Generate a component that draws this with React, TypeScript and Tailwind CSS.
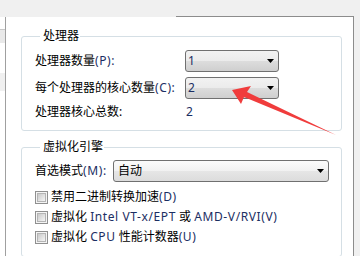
import React from 'react';

const Latin: React.FC<{ children: React.ReactNode }> = ({ children }) => (
  <span className="text-[#1b2e63] tracking-[0.6px]">{children}</span>
);

const Caret = () => (
  <svg width="7" height="4" viewBox="0 0 7 4" className="shrink-0">
    <path d="M0 0h7L3.5 4z" fill="#000" />
  </svg>
);

const Combo: React.FC<{ value: React.ReactNode; light?: boolean; className?: string }> = ({ value, light, className }) => (
  <div
    className={
      'h-[22px] rounded-[3px] border border-[#707070] flex items-center justify-between pl-[2px] pr-[4px] ' +
      (light
        ? 'bg-[linear-gradient(#fbfbfb,#f1f1f1_50%,#e6e6e6_50%,#dcdcdc)] '
        : 'bg-[linear-gradient(#f2f2f2,#ebebeb_50%,#dddddd_50%,#cfcfcf)] ') +
      (className ?? '')
    }
  >
    <span className="leading-[18px]">{value}</span>
    <Caret />
  </div>
);

const Check: React.FC<{ children: React.ReactNode }> = ({ children }) => (
  <div className="h-[20px] flex items-center gap-[3px]">
    <div className="w-[13px] h-[13px] border border-[#8f8f8f] bg-[#f4f4f4] p-[1px] shrink-0">
      <div className="w-full h-full border border-[#b4b4b4] bg-gradient-to-br from-[#c9c9c9] to-[#f5f5f5]" />
    </div>
    <span className="leading-[18px] whitespace-nowrap">{children}</span>
  </div>
);

const App: React.FC = () => {
  return (
    <div className="relative w-[360px] h-[256px] overflow-hidden bg-[#f0f0f0] text-[12px] text-black font-['Noto_Sans','Noto_Sans_CJK_SC',sans-serif]">
      <div className="h-[17px] flex">
        <div className="w-[176px]" />
        <div className="flex-1 mr-[6px] mt-[16px] h-[1px] bg-[#8c8c8c]" />
      </div>

      <div className="flex h-[239px]">
        {/* edge of the device list */}
        <div className="w-[6px] bg-white border-r border-[#a0a0a0] flex flex-col">
          <div className="h-[12px]" />
          <div className="h-[14px] bg-[#e9e9e9] border-t border-[#c8c8c8]" />
          <div className="h-[30px]" />
          <div className="h-[18px] bg-[#f0f0f0]" />
        </div>

        {/* settings pane */}
        <div className="w-[348px] bg-white border-r border-[#8c8c8c] pl-[15px] pr-[11px] pt-[12px]">
          <fieldset className="border border-[#d5dfe5] rounded-[3px] pl-[13px] pt-[7px] pb-[9px]">
            <legend className="ml-[5px] pl-[3px] pr-[1px] leading-[14px]">处理器</legend>
            <div className="flex flex-col">
              <div className="flex items-center h-[22px]">
                <span className="w-[150px] leading-[18px]">
                  处理器数量<Latin>(P):</Latin>
                </span>
                <Combo value={<Latin>1</Latin>} className="w-[94px]" />
              </div>
              <div className="flex items-center h-[22px] mt-[5px]">
                <span className="w-[150px] leading-[18px] whitespace-nowrap">
                  每个处理器的核心数量<Latin>(C):</Latin>
                </span>
                <Combo value={<Latin>2</Latin>} className="w-[94px]" />
              </div>
              <div className="flex items-center h-[18px] mt-[4px]">
                <span className="w-[150px] leading-[18px]">处理器核心总数:</span>
                <span className="leading-[18px] pl-[1px]">
                  <Latin>2</Latin>
                </span>
              </div>
            </div>
          </fieldset>

          <fieldset className="mt-[9px] border border-[#d5dfe5] rounded-[3px] pl-[13px] pt-[6px] pb-[9px]">
            <legend className="ml-[5px] pl-[3px] pr-[1px] leading-[14px]">虚拟化引擎</legend>
            <div className="flex items-center h-[22px]">
              <span className="w-[78px] leading-[18px] whitespace-nowrap">
                首选模式<Latin>(M):</Latin>
              </span>
              <Combo value="自动" light className="w-[216px] pl-[4px]" />
            </div>
            <div className="mt-[5px] flex flex-col">
              <Check>
                禁用二进制转换加速<Latin>(D)</Latin>
              </Check>
              <Check>
                虚拟化 <Latin>Intel VT-x/EPT</Latin> 或 <Latin>AMD-V/RVI(V)</Latin>
              </Check>
              <Check>
                虚拟化 <Latin>CPU</Latin> 性能计数器<Latin>(U)</Latin>
              </Check>
            </div>
          </fieldset>
        </div>
        <div className="flex-1" />
      </div>

      {/* red annotation arrow */}
      <svg className="absolute inset-0 pointer-events-none" width="360" height="256" viewBox="0 0 360 256">
        <path d="M232 90 L251 86 L247 92 L336 135 L244 97 L241 104 Z" fill="#f03c3c" />
      </svg>
    </div>
  );
};

export default App;
